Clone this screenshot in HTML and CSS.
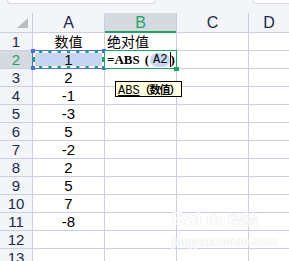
FILE: index.html
```html
<!DOCTYPE html>
<html lang="zh-CN">
<head>
<meta charset="utf-8">
<title>ABS</title>
<link rel="stylesheet" href="styles.css">
</head>
<body>
<div class="app">
  <div class="topbar"><div class="box left"></div><div class="box right"></div></div>
  <div class="sheet">
    <div class="corner"><svg width="32" height="19" viewBox="0 0 32 19"><polygon points="17,15 28,15 28,5" fill="#b9bdc5"/></svg></div>
    <div class="ch">A</div><div class="ch active">B</div><div class="ch">C</div><div class="ch">D</div>

    <div class="rh">1</div><div class="c num cjk">数值</div><div class="c txt">绝对值</div><div class="c"></div><div class="c"></div>

    <div class="rh active">2</div>
    <div class="c num sel"><i class="h tl"></i><i class="h tr"></i><i class="h bl"></i><i class="h br"></i><span class="val">1</span></div>
    <div class="c edit"><span class="f">=ABS<span class="par">(</span><span class="ref">A2</span><span class="caret"></span>)</span><i class="fill"></i></div>
    <div class="c"></div><div class="c"></div>

    <div class="rh">3</div><div class="c num">2</div><div class="c"></div><div class="c"></div><div class="c"></div>
    <div class="rh">4</div><div class="c num">-1</div><div class="c"></div><div class="c"></div><div class="c"></div>
    <div class="rh">5</div><div class="c num">-3</div><div class="c"></div><div class="c"></div><div class="c"></div>
    <div class="rh">6</div><div class="c num">5</div><div class="c"></div><div class="c"></div><div class="c"></div>
    <div class="rh">7</div><div class="c num">-2</div><div class="c"></div><div class="c"></div><div class="c"></div>
    <div class="rh">8</div><div class="c num">2</div><div class="c"></div><div class="c"></div><div class="c"></div>
    <div class="rh">9</div><div class="c num">5</div><div class="c"></div><div class="c"></div><div class="c"></div>
    <div class="rh">10</div><div class="c num">7</div><div class="c"></div><div class="c"></div><div class="c"></div>
    <div class="rh">11</div><div class="c num">-8</div><div class="c"></div><div class="c"></div><div class="c"></div>
    <div class="rh">12</div><div class="c"></div><div class="c"></div><div class="c"></div><div class="c"></div>
    <div class="rh">13</div><div class="c"></div><div class="c"></div><div class="c"></div><div class="c"></div>
  </div>

  <div class="tip"><span class="fn">ABS</span><span class="arg">（数值）</span></div>

  <div class="wm">
    <div class="wm-logo"><span class="bai">Bai</span><span class="du">du</span><span class="jy">经验</span></div>
    <div class="wm-url">jingyan.baidu.com</div>
  </div>
</div>
</body>
</html>
```

FILE: styles.css
```css
* { box-sizing: border-box; }
body {
  margin: 0;
  background: #fff;
  font-family: "Liberation Sans", "Noto Sans CJK SC", sans-serif;
}
.app {
  position: relative;
  width: 289px;
  height: 261px;
  overflow: hidden;
}
.topbar {
  height: 13px;
  background: #f3f5f8;
  display: flex;
  justify-content: space-between;
  padding-left: 7px;
}
.box {
  height: 4px;
  background: #fff;
  border: 1px solid #d4d8e0;
  border-top: none;
  border-radius: 0 0 4px 4px;
}
.box.left { width: 149px; }
.box.right { width: 42px; margin-right: -5px; }

.sheet {
  display: grid;
  grid-template-columns: 32px 71px 71px 71px 1fr;
  grid-template-rows: 19px repeat(13, 17px);
  gap: 1px;
  background: #c9cee0;
}
.corner, .ch, .rh {
  background: #f3f5f8;
  color: #1d2a4c;
}
.corner svg { display: block; }
.ch {
  font-size: 16px;
  line-height: 19px;
  text-align: center;
}
.ch.active {
  background: #d5d9e0;
  color: #1fa36a;
  box-shadow: inset 0 -1px 0 #21a366, 0 1px 0 #21a366;
  position: relative;
  z-index: 2;
}
.rh {
  font-size: 15px;
  line-height: 17px;
  text-align: center;
}
.rh.active {
  background: #d5d9e0;
  color: #1fa36a;
}
.c {
  background: #fff;
  font-size: 15px;
  line-height: 17px;
  color: #000;
}
.num { text-align: center; }
.cjk { font-family: "Noto Sans CJK SC", sans-serif; font-size: 14px; }
.txt { padding-left: 2px; font-family: "Noto Sans CJK SC", sans-serif; font-size: 14px; }

.sel {
  position: relative;
  background: #c7d5f2;
}
.sel::before {
  content: "";
  position: absolute;
  inset: 0;
  border: 2px dashed #fff;
  background: linear-gradient(#c7d5f2, #c7d5f2) padding-box, linear-gradient(#1fa46c, #1fa46c) border-box;
  outline: 1px solid #4a70d8;
}
.sel .val { position: relative; }
.h {
  position: absolute;
  width: 4px;
  height: 4px;
  background: #4a70d8;
  z-index: 1;
}
.h.tl { left: -2px; top: -2px; }
.h.tr { right: -2px; top: -2px; }
.h.bl { left: -2px; bottom: -2px; }
.h.br { right: -2px; bottom: -2px; }

.edit {
  position: relative;
  white-space: nowrap;
  z-index: 3;
  background: transparent;
}
.edit::after {
  content: "";
  position: absolute;
  inset: -1px;
  border: 2px solid #21a366;
  pointer-events: none;
}
.f {
  position: relative;
  z-index: 1;
  display: flex;
  align-items: center;
  height: 17px;
  padding-left: 2px;
  font-family: "Liberation Serif", serif;
  font-weight: bold;
  font-size: 13px;
  background: #fff;
}
.par { padding-left: 5px; padding-right: 1px; }
.ref {
  font-family: "Liberation Mono", monospace;
  font-weight: normal;
  font-size: 12px;
  background: #c9d6f2;
  border-radius: 7px;
  padding: 0 3px;
  line-height: 14px;
}
.caret {
  display: inline-block;
  width: 1px;
  height: 15px;
  background: #000;
  margin-right: -1px;
}
.fill {
  position: absolute;
  right: -3px;
  bottom: -3px;
  width: 5px;
  height: 4px;
  background: #21a366;
  z-index: 2;
}

.tip {
  position: absolute;
  left: 115px;
  top: 81px;
  height: 16px;
  border: 1px solid #000;
  background: #ffffe1;
  padding: 0 1px 0 2px;
  font-size: 12px;
  line-height: 14px;
  white-space: nowrap;
  z-index: 5;
}
.fn {
  font-family: "Liberation Mono", monospace;
  text-decoration: underline;
}
.arg {
  font-family: "Noto Sans CJK SC", sans-serif;
  font-weight: bold;
  font-size: 11px;
  letter-spacing: -1px;
}

.wm {
  position: absolute;
  left: 172px;
  top: 207px;
  color: #fff;
  text-shadow: 0 0 1px #d3d6de, 0 0 1px #d3d6de;
  opacity: 0.75;
  z-index: 4;
}
.wm-logo {
  display: flex;
  align-items: baseline;
  font-weight: bold;
  font-size: 19px;
  line-height: 24px;
}
.du { font-size: 15px; margin-left: 5px; }
.jy { font-family: "Noto Sans CJK SC", sans-serif; font-size: 15px; margin-left: 3px; }
.wm-url {
  font-weight: bold;
  font-size: 12px;
  line-height: 14px;
  margin-top: 3px;
}
```
